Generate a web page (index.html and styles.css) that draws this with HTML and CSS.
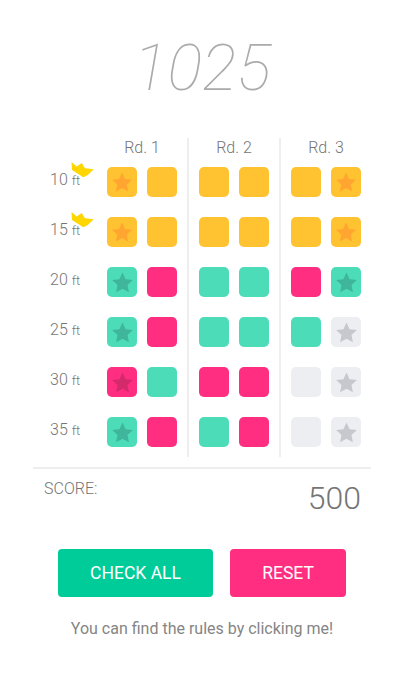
FILE: index.html
```html
<!DOCTYPE html>
<html lang="en">
<head>
    <meta charset="UTF-8">
    <meta name="viewport" content="width=device-width, initial-scale=1.0">
    <title>Free throw score</title>
    <link rel="stylesheet" href="styles.css">
</head>
<body>
    <svg class="defs" width="0" height="0">
        <symbol id="star" viewBox="0 0 24 24">
            <path d="M12 1.6l3.2 7 7.6.9-5.6 5.2 1.5 7.6L12 18.5l-6.7 3.8 1.5-7.6L1.2 9.5l7.6-.9z" stroke-linejoin="round"/>
        </symbol>
        <symbol id="crown" viewBox="0 0 24 18">
            <path d="M.5 1l5.2 4.6 5-3.6 3.3 5.2 8.8 1-6.3 6-4.3 2L1 9z"/>
        </symbol>
    </svg>
    <div class="container">
        <h1 class="total">1025</h1>

        <div class="board">
            <div class="labels">
                <div class="label"><svg class="crown"><use href="#crown"/></svg>10 <small>ft</small></div>
                <div class="label"><svg class="crown"><use href="#crown"/></svg>15 <small>ft</small></div>
                <div class="label">20 <small>ft</small></div>
                <div class="label">25 <small>ft</small></div>
                <div class="label">30 <small>ft</small></div>
                <div class="label">35 <small>ft</small></div>
            </div>

            <div class="round">
                <div class="round-title">Rd. 1</div>
                <div class="tiles">
                    <div class="tile gold"><svg class="star"><use href="#star"/></svg></div>
                    <div class="tile gold"></div>
                    <div class="tile gold"><svg class="star"><use href="#star"/></svg></div>
                    <div class="tile gold"></div>
                    <div class="tile teal"><svg class="star"><use href="#star"/></svg></div>
                    <div class="tile pink"></div>
                    <div class="tile teal"><svg class="star"><use href="#star"/></svg></div>
                    <div class="tile pink"></div>
                    <div class="tile pink"><svg class="star"><use href="#star"/></svg></div>
                    <div class="tile teal"></div>
                    <div class="tile teal"><svg class="star"><use href="#star"/></svg></div>
                    <div class="tile pink"></div>
                </div>
            </div>

            <div class="round">
                <div class="round-title">Rd. 2</div>
                <div class="tiles">
                    <div class="tile gold"></div>
                    <div class="tile gold"></div>
                    <div class="tile gold"></div>
                    <div class="tile gold"></div>
                    <div class="tile teal"></div>
                    <div class="tile teal"></div>
                    <div class="tile teal"></div>
                    <div class="tile teal"></div>
                    <div class="tile pink"></div>
                    <div class="tile pink"></div>
                    <div class="tile teal"></div>
                    <div class="tile pink"></div>
                </div>
            </div>

            <div class="round last">
                <div class="round-title">Rd. 3</div>
                <div class="tiles">
                    <div class="tile gold"></div>
                    <div class="tile gold"><svg class="star"><use href="#star"/></svg></div>
                    <div class="tile gold"></div>
                    <div class="tile gold"><svg class="star"><use href="#star"/></svg></div>
                    <div class="tile pink"></div>
                    <div class="tile teal"><svg class="star"><use href="#star"/></svg></div>
                    <div class="tile teal"></div>
                    <div class="tile grey"><svg class="star"><use href="#star"/></svg></div>
                    <div class="tile grey"></div>
                    <div class="tile grey"><svg class="star"><use href="#star"/></svg></div>
                    <div class="tile grey"></div>
                    <div class="tile grey"><svg class="star"><use href="#star"/></svg></div>
                </div>
            </div>
        </div>

        <div class="score">
            <span class="score-label">SCORE:</span>
            <span class="score-value">500</span>
        </div>

        <div class="actions">
            <button class="btn btn-check">CHECK ALL</button>
            <button class="btn btn-reset">RESET</button>
        </div>

        <p class="rules">You can find the rules by clicking me!</p>
    </div>
</body>
</html>
```

FILE: styles.css
```css
* {
    box-sizing: border-box;
}
body {
    margin: 0;
    background: #fff;
    font-family: Roboto, 'Liberation Sans', sans-serif;
    color: #757575;
}
.defs {
    display: block;
    height: 0;
}
.container {
    width: 338px;
    margin-left: 33px;
}
.total {
    margin: 0;
    padding-top: 30px;
    height: 138px;
    text-align: center;
    font-size: 65px;
    line-height: 76px;
    font-weight: 100;
    font-style: italic;
    color: #ababab;
}
.board {
    display: flex;
    height: 319px;
}
.labels {
    width: 64px;
    padding-top: 29px;
}
.label {
    position: relative;
    height: 50px;
    line-height: 26px;
    padding-left: 17px;
    font-size: 16px;
    font-weight: 300;
}
.label small {
    font-size: 13px;
}
.crown {
    position: absolute;
    left: 38px;
    top: -6px;
    width: 24px;
    height: 18px;
    fill: #ffd600;
}
.round {
    width: 92px;
    padding: 0 10px;
    border-right: 2px solid #eeeeee;
}
.round.last {
    width: 90px;
    border-right: none;
}
.round-title {
    height: 29px;
    line-height: 19px;
    text-align: center;
    font-size: 16px;
    font-weight: 300;
}
.tiles {
    display: grid;
    grid-template-columns: 30px 30px;
    grid-auto-rows: 30px;
    gap: 20px 10px;
}
.tile {
    display: flex;
    align-items: center;
    justify-content: center;
    border-radius: 5px;
}
.star {
    width: 23px;
    height: 23px;
}
.gold {
    background: #ffc231;
    fill: #ffa530;
}
.gold .star {
    width: 22px;
    height: 22px;
}
.teal {
    background: #4cdcb8;
    fill: #3fb59b;
}
.pink {
    background: #ff2e80;
    fill: #d42a6c;
}
.grey {
    background: #eceef1;
    fill: #c6c8cd;
}
.score {
    display: flex;
    justify-content: space-between;
    align-items: flex-start;
    height: 82px;
    margin-top: 10px;
    padding: 11px 10px 0 11px;
    border-top: 2px solid #eeeeee;
}
.score-label {
    font-size: 16px;
    line-height: 17px;
    font-weight: 300;
}
.score-value {
    font-size: 32px;
    line-height: 37px;
    font-weight: 300;
}
.actions {
    display: flex;
    gap: 17px;
    padding-left: 25px;
}
.btn {
    height: 48px;
    border: none;
    border-radius: 4px;
    color: #fff;
    font-family: inherit;
    font-size: 17.5px;
    font-weight: 400;
}
.btn-check {
    width: 155px;
    background: #00cc99;
}
.btn-reset {
    width: 116px;
    background: #ff2e80;
}
.rules {
    margin: 22px 0 0;
    text-align: center;
    font-size: 16px;
    line-height: 19px;
    color: #858585;
}
```
